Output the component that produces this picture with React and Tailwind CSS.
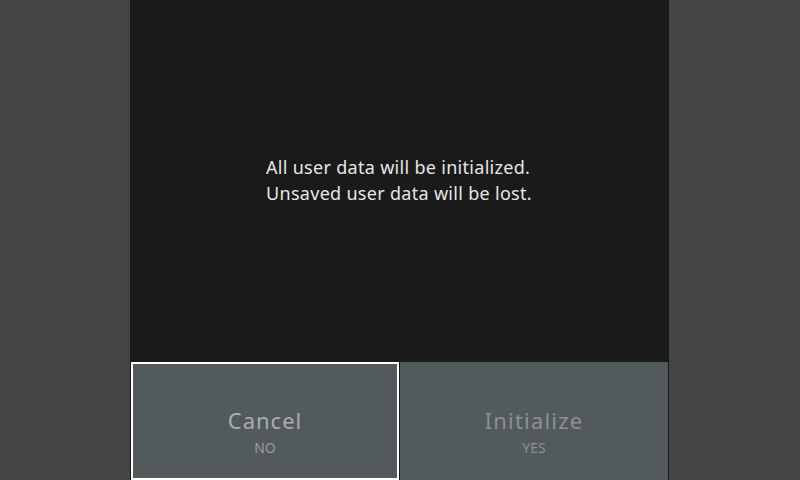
export default function App() {
  return (
    <div className="w-[800px] h-[480px] flex bg-[#434542] overflow-hidden" style={{ fontFamily: '"Noto Sans", "DejaVu Sans", sans-serif' }}>
      <div className="w-[130px] shrink-0" />
      <div className="w-[539px] shrink-0 bg-[#1a1a1a] flex flex-col">
        <div className="h-[362px] flex flex-col items-start pl-[136px] pt-[154px] text-[18px] leading-[26px] tracking-[0.3px] text-[#e6e6e6]">
          <div>All user data will be initialized.</div>
          <div>Unsaved user data will be lost.</div>
        </div>
        <div className="flex-1 flex pl-[1px] gap-[1px] pr-[1px]">
          <div className="w-[268px] border-2 border-white bg-[#525a5c] flex flex-col items-center pt-[43px]">
            <div className="text-[22px] leading-[26px] tracking-[1px] text-[#a9adad]">Cancel</div>
            <div className="mt-[6px] text-[14px] leading-[18px] text-[#9a9e9e]">NO</div>
          </div>
          <div className="flex-1 bg-[#525a5c] flex flex-col items-center pt-[45px]">
            <div className="text-[22px] leading-[26px] tracking-[1.2px] text-[#8c9192]">Initialize</div>
            <div className="mt-[6px] text-[14px] leading-[18px] text-[#8c9192]">YES</div>
          </div>
        </div>
      </div>
      <div className="flex-1" />
    </div>
  );
}
